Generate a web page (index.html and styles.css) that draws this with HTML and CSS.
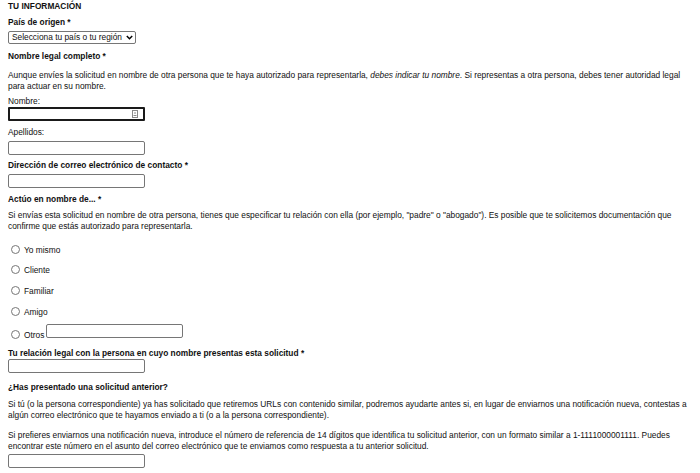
FILE: index.html
```html
<!DOCTYPE html>
<html lang="es">
<head>
<meta charset="utf-8">
<link rel="stylesheet" href="styles.css">
</head>
<body>
<form class="form">
  <h3 class="section-title">TU INFORMACIÓN</h3>

  <div class="field f-country">
    <div class="label-bold">País de origen *</div>
    <div class="select"><span>Selecciona tu país o tu región</span>
      <svg class="chev" width="7" height="5" viewBox="0 0 7 5"><path d="M0.8 1 L3.5 3.7 L6.2 1" fill="none" stroke="#000" stroke-width="1.5"/></svg>
    </div>
  </div>

  <div class="field f-name">
    <div class="label-bold">Nombre legal completo *</div>
    <p class="para p-name">Aunque envíes la solicitud en nombre de otra persona que te haya autorizado para representarla, <em>debes indicar tu nombre</em>. Si representas a otra persona, debes tener autoridad legal<br>para actuar en su nombre.</p>
    <div class="label">Nombre:</div>
    <div class="input focused">
      <svg class="autofill" width="6" height="8" viewBox="0 0 6 8"><rect x="0.5" y="0.5" width="5" height="7" fill="#fff" stroke="#8a8a8a"/><path d="M2 3 H4 M1.5 5.5 H4.5" stroke="#8a8a8a" stroke-width="1"/></svg>
    </div>
    <div class="label l-last">Apellidos:</div>
    <div class="input gap3"></div>
  </div>

  <div class="field f-email">
    <div class="label-bold">Dirección de correo electrónico de contacto *</div>
    <div class="input gap3"></div>
  </div>

  <div class="field f-behalf">
    <div class="label-bold">Actúo en nombre de... *</div>
    <p class="para p-behalf">Si envías esta solicitud en nombre de otra persona, tienes que especificar tu relación con ella (por ejemplo, "padre" o "abogado"). Es posible que te solicitemos documentación que<br>confirme que estás autorizado para representarla.</p>
    <ul class="radios">
      <li class="radio"><span class="dot"></span>Yo mismo</li>
      <li class="radio"><span class="dot"></span>Cliente</li>
      <li class="radio"><span class="dot"></span>Familiar</li>
      <li class="radio"><span class="dot"></span>Amigo</li>
      <li class="radio radio-other"><span class="dot"></span>Otros<span class="input inline"></span></li>
    </ul>
  </div>

  <div class="field f-relation">
    <div class="label-bold">Tu relación legal con la persona en cuyo nombre presentas esta solicitud *</div>
    <div class="input"></div>
  </div>

  <div class="field f-previous">
    <div class="label-bold">¿Has presentado una solicitud anterior?</div>
    <p class="para p-prev1">Si tú (o la persona correspondiente) ya has solicitado que retiremos URLs con contenido similar, podremos ayudarte antes si, en lugar de enviarnos una notificación nueva, contestas a<br>algún correo electrónico que te hayamos enviado a ti (o a la persona correspondiente).</p>
    <p class="para p-prev2">Si prefieres enviarnos una notificación nueva, introduce el número de referencia de 14 dígitos que identifica tu solicitud anterior, con un formato similar a 1-1111000001111. Puedes<br>encontrar este número en el asunto del correo electrónico que te enviamos como respuesta a tu anterior solicitud.</p>
    <div class="input last"></div>
  </div>
</form>
</body>
</html>
```

FILE: styles.css
```css
html, body {
  margin: 0;
  background: #fff;
}
body {
  padding: 1px 8px 0;
  font-family: "Liberation Sans", Arial, sans-serif;
  font-size: 8.35px;
  line-height: 11px;
  color: #111;
}
.form {
  display: flex;
  flex-direction: column;
  align-items: flex-start;
}
.section-title {
  margin: 0;
  font-size: 8.35px;
  line-height: 11px;
  font-weight: bold;
}
.label-bold {
  font-weight: bold;
  white-space: nowrap;
}
.f-country { margin-top: 5px; }
.f-name { margin-top: 7px; }
.f-email { margin-top: 5px; }
.f-behalf { margin-top: 6px; }
.f-relation { margin-top: 7px; }
.f-previous { margin-top: 9px; }

.select {
  display: flex;
  align-items: center;
  gap: 3px;
  box-sizing: border-box;
  width: 128px;
  height: 13px;
  margin-top: 3px;
  padding: 0 2px 0 3px;
  border: 1px solid #767676;
  border-radius: 2px;
  white-space: nowrap;
  line-height: 11px;
}
.select span { flex: 1; }
.chev { display: block; }

.para {
  margin: 8px 0 0;
  white-space: nowrap;
}
.p-name { margin-bottom: 4px; }
.p-behalf { margin-top: 5px; }
.p-prev1 { margin-top: 6px; }
.p-prev2 { margin-top: 9px; }

.l-last { margin-top: 6px; }

.input {
  position: relative;
  box-sizing: border-box;
  width: 137px;
  height: 14px;
  border: 1px solid #767676;
  border-radius: 2px;
  background: #fff;
}
.input.gap3 { margin-top: 3px; }
.input.focused {
  border: 2px solid #1a1a1a;
  border-radius: 1px;
}
.autofill {
  position: absolute;
  right: 5px;
  top: 1px;
  display: block;
}

.radios {
  list-style: none;
  margin: 12.5px 0 0;
  padding: 0;
}
.radio {
  display: flex;
  align-items: flex-end;
  padding-left: 3px;
  white-space: nowrap;
}
.radio + .radio { margin-top: 9.75px; }
.radio.radio-other { margin-top: 6.5px; }
.dot {
  flex: none;
  box-sizing: border-box;
  width: 9px;
  height: 9px;
  margin: 0 4px 2px 0;
  border: 1px solid #767676;
  border-radius: 50%;
}
.input.inline {
  flex: none;
  margin: 0 0 3px 2px;
}
.input.last { margin-top: 2px; }
```
